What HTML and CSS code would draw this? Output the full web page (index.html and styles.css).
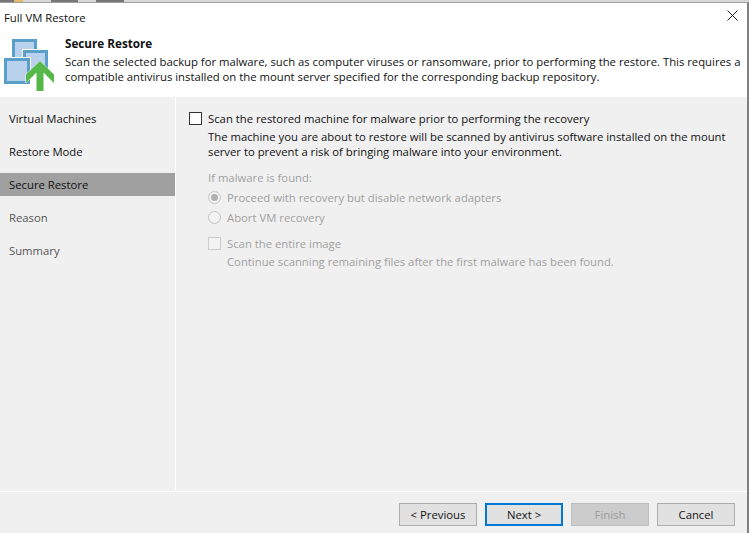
FILE: index.html
```html
<!DOCTYPE html>
<html lang="en">
<head>
<meta charset="utf-8">
<title>Full VM Restore</title>
<link rel="stylesheet" href="styles.css">
</head>
<body>
<div class="tabstrip">
  <span class="tab tab-a"></span><span class="tab tab-o"></span><span class="tab tab-b"></span><span class="tab tab-c"></span><span class="tab tab-b2"></span><span class="tab tab-d"></span>
</div>
<div class="window">
  <header class="titlebar">
    <span>Full VM Restore</span>
    <svg class="close" width="11" height="11" viewBox="0 0 11 11"><path d="M.5.5l10 10M10.500.5l-10 10" stroke="#222" fill="none"/></svg>
  </header>
  <section class="banner">
    <svg class="logo" width="56" height="54" viewBox="0 38 56 54">
      <rect x="13.500" y="40.500" width="22" height="20" fill="#b8d1ec" stroke="#5a9fc9" stroke-width="3"/>
      <rect x="22" y="49" width="27" height="26" fill="#fff"/>
      <rect x="24.500" y="51.500" width="22" height="21" fill="#b8d1ec" stroke="#5a9fc9" stroke-width="3"/>
      <rect x="3" y="57" width="28" height="27" fill="#fff"/>
      <rect x="5.500" y="59.500" width="23" height="23" fill="#b8d1ec" stroke="#5a9fc9" stroke-width="3"/>
      <path d="M40 61 L54 74.500 V83 L43.500 72.500 V91 H36.500 V72.500 L26 83 V74.500 Z" fill="#56b848" stroke="#fff" stroke-width="1" paint-order="stroke"/>
    </svg>
    <div class="banner-text">
      <h1>Secure Restore</h1>
      <p>Scan the selected backup for malware, such as computer viruses or ransomware, prior to performing the restore. This requires a compatible antivirus installed on the mount server specified for the corresponding backup repository.</p>
    </div>
  </section>
  <div class="body">
    <nav class="steps">
      <a class="step">Virtual Machines</a>
      <a class="step">Restore Mode</a>
      <a class="step current">Secure Restore</a>
      <a class="step muted">Reason</a>
      <a class="step muted">Summary</a>
    </nav>
    <main class="content">
      <div class="row main-check">
        <span class="box"></span>
        <span>Scan the restored machine for malware prior to performing the recovery</span>
      </div>
      <p class="desc">The machine you are about to restore will be scanned by antivirus software installed on the mount server to prevent a risk of bringing malware into your environment.</p>
      <div class="options">
        <div class="found">If malware is found:</div>
        <div class="row radio-row"><span class="radio on"></span><span>Proceed with recovery but disable network adapters</span></div>
        <div class="row radio-row"><span class="radio"></span><span>Abort VM recovery</span></div>
        <div class="row sub-check"><span class="box off"></span><span>Scan the entire image</span></div>
        <div class="hint">Continue scanning remaining files after the first malware has been found.</div>
      </div>
    </main>
  </div>
  <footer class="footer">
    <button class="btn">&lt; Previous</button>
    <button class="btn primary">Next &gt;</button>
    <button class="btn disabled">Finish</button>
    <button class="btn">Cancel</button>
  </footer>
</div>
</body>
</html>
```
FILE: styles.css
```css
* { box-sizing: border-box; }
html, body { margin: 0; height: 100%; }
body {
  width: 749px; height: 533px; overflow: hidden;
  display: flex; flex-direction: column;
  font: 11.3px/15px "Open Sans", "Noto Sans", sans-serif;
  color: #111; background: #fff;
}
.tabstrip { height: 2px; display: flex; background: #d8d8d8; flex: none; }
.tab { height: 2px; display: block; }
.tab-a { width: 14px; background: #777; }
.tab-o { width: 9px; background: #e3b964; }
.tab-b { width: 28px; }
.tab-c { width: 27px; background: #777; }
.tab-b2 { width: 18px; }
.tab-d { width: 28px; background: #777; }
.window { flex: 1; display: flex; flex-direction: column; background: #fff; min-height: 0; border-top: 1px solid #a0a0a0; border-right: 2px solid #808080; }
.titlebar { height: 27px; display: flex; align-items: center; justify-content: space-between; padding: 5px 9px 3px 4px; flex: none; }
.close { margin-top: -5px; }
.banner { height: 67px; display: flex; flex: none; background: #fff; }
.logo { margin: 8px 0 0 0; flex: none; }
.banner-text { margin-left: 9px; padding-top: 6px; width: 678px; }
h1 { margin: 0 0 3px; font-size: 11.7px; line-height: 15px; font-weight: 700; }
.banner-text p { margin: 0; line-height: 15px; }
.body { flex: 1; display: flex; background: #f0f0f0; min-height: 0; }
.steps { width: 175px; flex: none; padding-top: 10px; display: flex; flex-direction: column; gap: 10px; }
.step { height: 23px; line-height: 23px; padding-left: 9px; }
.step.current { background: #a0a0a0; }
.step.muted { color: #555; }
.content { flex: 1; border-left: 1px solid #fff; padding: 14px 12px 0 13px; }
.row { display: flex; align-items: center; }
.main-check { gap: 6px; height: 15px; }
.box { width: 13px; height: 13px; border: 1px solid #333; background: #fff; flex: none; }
.box.off { border-color: #ccc; background: #f2f2f2; }
.desc { margin: 3px 0 0 19px; width: 530px; }
.options { margin-left: 19px; padding-top: 11px; color: #a0a0a0; }
.found { height: 17px; }
.radio-row { gap: 6px; height: 20px; }
.radio { width: 13px; height: 13px; border-radius: 50%; border: 1px solid #c4c4c4; background: #f2f2f2; flex: none; position: relative; }
.radio.on::after { content: ""; position: absolute; left: 2px; top: 2px; width: 7px; height: 7px; border-radius: 50%; background: #b0b0b0; }
.sub-check { gap: 6px; height: 15px; margin-top: 9px; }
.hint { margin: 3px 0 0 19px; }
.footer { height: 42px; flex: none; background: #f0f0f0; border-top: 1px solid #fff; display: flex; justify-content: flex-end; gap: 8px; padding: 11px 12px 0 0; }
.btn { width: 78px; height: 23px; padding: 0; font: inherit; color: #111; background: #e1e1e1; border: 1px solid #adadad; }
.btn.primary { border: 2px solid #0078d7; }
.btn.disabled { background: #ccc; color: #9a9a9a; border-color: #bfbfbf; }
```
